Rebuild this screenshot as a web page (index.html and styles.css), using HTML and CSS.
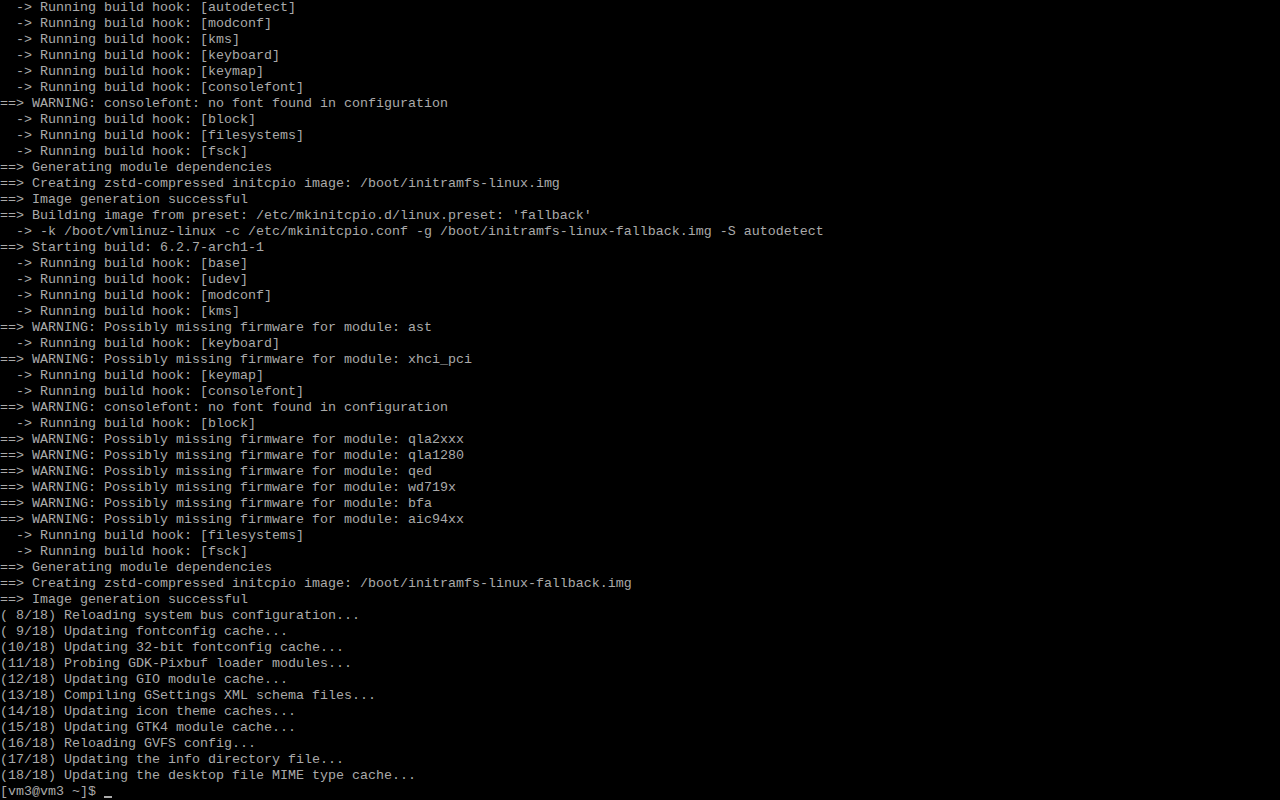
FILE: index.html
```html
<!DOCTYPE html>
<html>
<head>
<meta charset="utf-8">
<link rel="stylesheet" href="styles.css">
</head>
<body>
<pre class="console">  -&gt; Running build hook: [autodetect]
  -&gt; Running build hook: [modconf]
  -&gt; Running build hook: [kms]
  -&gt; Running build hook: [keyboard]
  -&gt; Running build hook: [keymap]
  -&gt; Running build hook: [consolefont]
==&gt; WARNING: consolefont: no font found in configuration
  -&gt; Running build hook: [block]
  -&gt; Running build hook: [filesystems]
  -&gt; Running build hook: [fsck]
==&gt; Generating module dependencies
==&gt; Creating zstd-compressed initcpio image: /boot/initramfs-linux.img
==&gt; Image generation successful
==&gt; Building image from preset: /etc/mkinitcpio.d/linux.preset: 'fallback'
  -&gt; -k /boot/vmlinuz-linux -c /etc/mkinitcpio.conf -g /boot/initramfs-linux-fallback.img -S autodetect
==&gt; Starting build: 6.2.7-arch1-1
  -&gt; Running build hook: [base]
  -&gt; Running build hook: [udev]
  -&gt; Running build hook: [modconf]
  -&gt; Running build hook: [kms]
==&gt; WARNING: Possibly missing firmware for module: ast
  -&gt; Running build hook: [keyboard]
==&gt; WARNING: Possibly missing firmware for module: xhci_pci
  -&gt; Running build hook: [keymap]
  -&gt; Running build hook: [consolefont]
==&gt; WARNING: consolefont: no font found in configuration
  -&gt; Running build hook: [block]
==&gt; WARNING: Possibly missing firmware for module: qla2xxx
==&gt; WARNING: Possibly missing firmware for module: qla1280
==&gt; WARNING: Possibly missing firmware for module: qed
==&gt; WARNING: Possibly missing firmware for module: wd719x
==&gt; WARNING: Possibly missing firmware for module: bfa
==&gt; WARNING: Possibly missing firmware for module: aic94xx
  -&gt; Running build hook: [filesystems]
  -&gt; Running build hook: [fsck]
==&gt; Generating module dependencies
==&gt; Creating zstd-compressed initcpio image: /boot/initramfs-linux-fallback.img
==&gt; Image generation successful
( 8/18) Reloading system bus configuration...
( 9/18) Updating fontconfig cache...
(10/18) Updating 32-bit fontconfig cache...
(11/18) Probing GDK-Pixbuf loader modules...
(12/18) Updating GIO module cache...
(13/18) Compiling GSettings XML schema files...
(14/18) Updating icon theme caches...
(15/18) Updating GTK4 module cache...
(16/18) Reloading GVFS config...
(17/18) Updating the info directory file...
(18/18) Updating the desktop file MIME type cache...
[vm3@vm3 ~]$ <span class="cursor"></span></pre>
</body>
</html>
```

FILE: styles.css
```css
html, body {
  margin: 0;
  padding: 0;
  background: #000;
  width: 1280px;
  height: 800px;
  overflow: hidden;
}

.console {
  margin: 0;
  padding: 0;
  font-family: "Liberation Mono", "DejaVu Sans Mono", monospace;
  font-size: 13.3333px;
  line-height: 16px;
  color: #aaaaaa;
  white-space: pre;
  -webkit-font-smoothing: none;
}

.cursor {
  display: inline-block;
  width: 8px;
  height: 2px;
  background: #aaaaaa;
  vertical-align: -3px;
}
```
